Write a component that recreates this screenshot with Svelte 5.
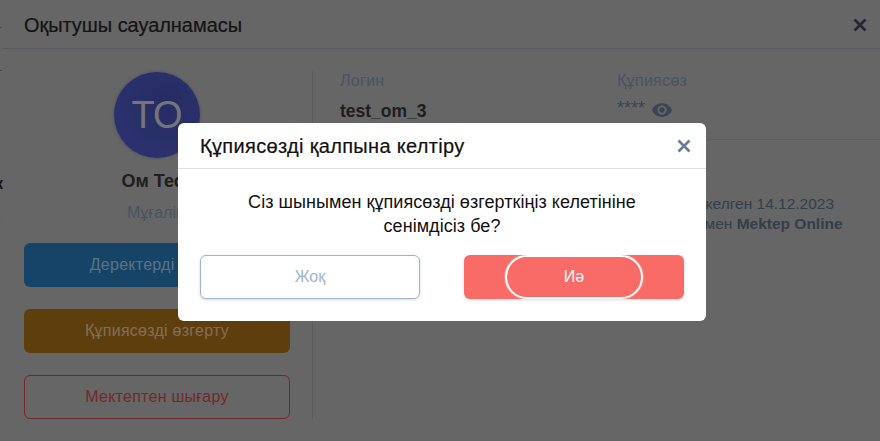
<script>
  const buttons = [
    { label: "Деректерді өңдеу", kind: "blue" },
    { label: "Құпиясөзді өзгерту", kind: "amber" },
    { label: "Мектептен шығару", kind: "outline" }
  ];
</script>

<div class="page">
  <span class="peek peek-k">к</span>
  <span class="peek peek-n">н</span>
  <i class="tick tick-a"></i>
  <i class="tick tick-b"></i>
  <i class="rail rail-a"></i>
  <i class="rail rail-b"></i>
  <section class="sheet">
    <header class="sheet-head">
      <h2>Оқытушы сауалнамасы</h2>
      <svg class="close" viewBox="0 0 14 14"><path d="M1.5 1.5l11 11M12.5 1.5l-11 11" /></svg>
    </header>
    <div class="sheet-body">
      <aside class="profile">
        <div class="avatar">ТО</div>
        <div class="name">Ом Тест</div>
        <div class="role">Мұғалім</div>
        {#each buttons as b}
          <button class="action {b.kind}">{b.label}</button>
        {/each}
      </aside>
      <div class="details">
        <div class="creds">
          <div class="cred">
            <div class="label">Логин</div>
            <div class="login">test_om_3</div>
          </div>
          <div class="cred">
            <div class="label">Құпиясөз</div>
            <div class="secret">
              <span>****</span>
              <svg viewBox="0 0 24 24"><path d="M12 4.5C7 4.5 2.73 7.61 1 12c1.73 4.39 6 7.5 11 7.5s9.27-3.11 11-7.5c-1.73-4.39-6-7.5-11-7.5zM12 17c-2.76 0-5-2.24-5-5s2.24-5 5-5 5 2.24 5 5-2.24 5-5 5zm0-8c-1.66 0-3 1.34-3 3s1.34 3 3 3 3-1.34 3-3-1.34-3-3-3z" /></svg>
            </div>
          </div>
        </div>
        <p class="note">
          Соңғы рет келген 14.12.2023<br />
          Бағдарлармен <b>Mektep Online</b>
        </p>
      </div>
    </div>
  </section>

  <div class="overlay">
    <div class="dialog">
      <div class="dialog-head">
        <h3>Құпиясөзді қалпына келтіру</h3>
        <svg class="dialog-close" viewBox="0 0 14 14"><path d="M1.5 1.5l11 11M12.5 1.5l-11 11" /></svg>
      </div>
      <p class="message">Сіз шынымен құпиясөзді өзгерткіңіз келетініне<br />сенімдісіз бе?</p>
      <div class="dialog-actions">
        <button class="no">Жоқ</button>
        <button class="yes"><span class="ring">Иә</span></button>
      </div>
    </div>
  </div>
</div>

<style>
  :global(body) {
    margin: 0;
    background: #aaa;
    font-family: "Liberation Sans", Arial, sans-serif;
  }

  .page {
    position: relative;
    height: 441px;
    overflow: hidden;
  }

  .sheet {
    margin-left: 2px;
    height: 441px;
    background: #aaa;
  }

  .sheet-head {
    height: 48px;
    border-bottom: 1px solid #96989f;
    padding: 0 13px 0 22px;
    display: flex;
    align-items: center;
    justify-content: space-between;
  }

  h2 {
    margin: 3px 0 0;
    font-size: 20px;
    font-weight: 400;
    letter-spacing: -0.05px;
    color: #222;
    -webkit-text-stroke: 0.2px #222;
  }

  .close {
    width: 14px;
    height: 14px;
    margin-top: 2px;
    fill: none;
    stroke: #3a4055;
    stroke-width: 2.6;
  }

  .sheet-body {
    display: flex;
    padding: 22px 20px 0 22px;
  }

  .profile {
    width: 266px;
    display: flex;
    flex-direction: column;
    align-items: center;
    padding-right: 22px;
    border-right: 1px solid #999;
    height: 348px;
  }

  .avatar {
    flex: none;
    width: 86px;
    height: 86px;
    margin-top: 1px;
    border-radius: 50%;
    background: radial-gradient(circle at 60% 35%, #3f4ba8, #4a56bb);
    box-shadow: 0 0 3px rgba(60, 70, 160, 0.5);
    color: #c4c4c4;
    font-size: 38px;
    display: flex;
    align-items: center;
    justify-content: center;
  }

  .name {
    margin-top: 13px;
    font-size: 18px;
    font-weight: 700;
    color: #333;
    line-height: 20px;
  }

  .role {
    margin-top: 13px;
    font-size: 16px;
    color: #7a8d9f;
    line-height: 18px;
    margin-bottom: 21px;
  }

  .action {
    width: 266px;
    height: 44px;
    flex: none;
    margin-bottom: 22px;
    border: 0;
    border-radius: 6px;
    font: 16px "Liberation Sans", Arial, sans-serif;
    letter-spacing: 0.25px;
  }

  .blue {
    background: #2472ad;
    color: rgba(255, 255, 255, 0.55);
  }

  .amber {
    background: #9f6816;
    color: rgba(255, 255, 255, 0.55);
  }

  .outline {
    background: transparent;
    border: 1px solid #c04545;
    color: #c04545;
  }

  .details {
    flex: 1;
    padding-left: 27px;
  }

  .creds {
    display: flex;
    height: 68px;
    border-bottom: 1px solid #999;
  }

  .cred {
    width: 277px;
  }

  .label {
    font-size: 16px;
    letter-spacing: 0.3px;
    line-height: 18px;
    color: #7a8d9f;
    margin-top: 1px;
  }

  .login {
    margin-top: 11px;
    font-size: 17.5px;
    font-weight: 700;
    color: #333;
  }

  .secret {
    margin-top: 9px;
    display: flex;
    align-items: center;
    gap: 6px;
    font-size: 18px;
    color: #5f7488;
  }

  .secret span {
    margin-top: -4px;
  }

  .secret svg {
    width: 22px;
    height: 22px;
    fill: #5f7488;
  }

  .note {
    margin: 54px 0 0 288px;
    font-size: 15.5px;
    line-height: 20px;
    color: #566a7c;
    white-space: nowrap;
  }

  .peek {
    position: absolute;
    left: -5px;
    font-size: 16px;
    font-weight: 700;
    color: #222;
  }

  .peek-k {
    top: 175px;
  }

  .peek-n {
    top: 332px;
    left: -9px;
  }

  .tick {
    position: absolute;
    left: 0;
    width: 2px;
    height: 1px;
    background: #777;
  }

  .tick-a {
    top: 27px;
  }

  .tick-b {
    top: 70px;
  }

  .rail {
    position: absolute;
    left: 1px;
    width: 1px;
    background: #a0a4b4;
  }

  .rail-a {
    top: 220px;
    height: 78px;
  }

  .rail-b {
    top: 376px;
    height: 50px;
  }

  .overlay {
    position: absolute;
    inset: 0;
    padding: 3px 0 0 4px;
    box-sizing: border-box;
    background: rgba(0, 0, 0, 0.4);
    display: flex;
    align-items: center;
    justify-content: center;
  }

  .dialog {
    width: 528px;
    height: 198px;
    background: #fff;
    border-radius: 6px;
  }

  .dialog-head {
    height: 45px;
    border-bottom: 1px solid #dcdfe6;
    padding: 0 15px 0 22px;
    display: flex;
    align-items: center;
    justify-content: space-between;
  }

  h3 {
    margin: 1px 0 0;
    font-size: 20px;
    font-weight: 400;
    letter-spacing: 0.33px;
    color: #111;
    -webkit-text-stroke: 0.2px #111;
  }

  .dialog-close {
    width: 14px;
    height: 14px;
    fill: none;
    stroke: #6b7a99;
    stroke-width: 2.6;
  }

  .message {
    margin: 21px 0 17px;
    text-align: center;
    font-size: 18px;
    letter-spacing: 0.05px;
    line-height: 24px;
    color: #111;
  }

  .dialog-actions {
    display: grid;
    grid-template-columns: 220px 220px;
    justify-content: space-between;
    padding: 0 22px;
  }

  .dialog-actions button {
    height: 44px;
    border-radius: 6px;
    font: 16px "Liberation Sans", Arial, sans-serif;
    box-shadow: 0 1px 3px rgba(0, 0, 0, 0.15);
  }

  .no {
    background: #fff;
    border: 1px solid #9db6cf;
    color: #9fb5cb;
  }

  .yes {
    background: #f96b67;
    border: 0;
    color: #fff;
    padding: 0;
    display: flex;
    justify-content: center;
  }

  .ring {
    box-sizing: border-box;
    width: 138px;
    height: 44px;
    border: 2.5px solid #fff;
    border-radius: 22px;
    box-shadow: 0 0 1.5px #fff;
    display: flex;
    align-items: center;
    justify-content: center;
  }
</style>
